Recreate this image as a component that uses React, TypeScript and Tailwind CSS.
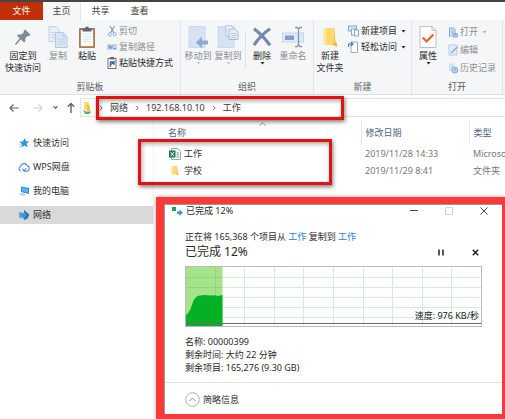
import type { ReactNode } from 'react';

type IconProps = { className?: string };

function PinIcon() {
  return (
    <svg width="18" height="20" viewBox="0 0 18 20" aria-hidden="true">
      <path d="M11.2 2.5 L16.4 7.6 L15.4 9 L13.4 9 L11.2 11.4 L11.4 14.6 L10 15.6 L3 8.8 L4 7.4 L7.4 7.4 L9.8 5.2 L9.8 3.6 Z" fill="#7e8d97" />
      <path d="M6.8 11.2 L1.5 17.5" stroke="#7e8d97" strokeWidth="1.5" />
    </svg>
  );
}

function CopyIcon() {
  return (
    <svg width="20" height="24" viewBox="0 0 20 24" aria-hidden="true">
      <path d="M1 1.5 H8 L11.5 5 V16.5 H1 Z" fill="#e6eef9" stroke="#c3d1e6" />
      <path d="M3 7.5 H9 M3 10 H9 M3 12.5 H9" stroke="#c3d1e6" strokeWidth=".8" />
      <path d="M7.5 7.5 H15 L19 11.5 V22.5 H7.5 Z" fill="#dbe6f5" stroke="#b6c8e1" />
      <path d="M15 7.5 V11.5 H19 M9.5 14 H17 M9.5 16.5 H17 M9.5 19 H17" stroke="#b4c7e2" strokeWidth=".8" fill="none" />
    </svg>
  );
}

function PasteIcon() {
  return (
    <svg width="18" height="24" viewBox="0 0 18 24" aria-hidden="true">
      <rect x="1" y="3" width="16" height="20" rx="1" fill="#ae7a4c" />
      <rect x="2.8" y="5" width="12.4" height="16.2" fill="#f8fbff" />
      <path d="M5 9 H13 M5 11.5 H13 M5 14 H13 M5 16.5 H13" stroke="#d3dfee" strokeWidth=".8" />
      <path d="M4.5 3.5 H7 A2 2 0 0 1 11 3.5 H13.5 V6.5 H4.5 Z" fill="#5f6973" />
    </svg>
  );
}

function ScissorsIcon() {
  return (
    <svg width="11" height="12" viewBox="0 0 11 12" fill="none" aria-hidden="true">
      <path d="M3 1 L7 8 M7.5 1 L3.5 8" stroke="#7e95b5" strokeWidth="1.1" />
      <circle cx="2.8" cy="9.3" r="1.6" stroke="#8fb0da" />
      <circle cx="7.6" cy="9.3" r="1.6" stroke="#8fb0da" />
    </svg>
  );
}

function PathIcon() {
  return (
    <svg width="11" height="12" viewBox="0 0 11 12" fill="none" aria-hidden="true">
      <rect x="0" y="3" width="10" height="6" fill="#c3d4ec" />
      <path d="M1.5 4.5 L2.5 7.5 L3.5 4.5 L4.5 7.5 L5.5 4.5 M6.5 7.5 H9" stroke="#6685b5" strokeWidth=".8" />
    </svg>
  );
}

function ShortcutIcon() {
  return (
    <svg width="11" height="12" viewBox="0 0 11 12" fill="none" aria-hidden="true">
      <rect x="1" y="1.5" width="8" height="10" fill="#fff" stroke="#8d6a4e" />
      <rect x="3" y="0" width="4" height="2.4" fill="#5f6a76" />
      <path d="M3.4 10 V5 H7.2 M4 7.6 L7 4.6 V8" stroke="#246cc0" strokeWidth="1.3" />
    </svg>
  );
}

function MoveToIcon() {
  return (
    <svg width="22" height="24" viewBox="0 0 22 24" aria-hidden="true">
      <rect x="2" y="1.5" width="16" height="21" fill="#d6e2f3" stroke="#ccd9ec" />
      <path d="M9 17.5 L15 11.8 V15.5 H21 V19.5 H15 V23.2 Z" fill="#92a8cb" />
    </svg>
  );
}

function CopyToIcon() {
  return (
    <svg width="22" height="24" viewBox="0 0 22 24" aria-hidden="true">
      <rect x="1" y="1.5" width="16" height="21" fill="#d6e2f3" stroke="#ccd9ec" />
      <path d="M9 .8 H15 L17 3 V11 H9 Z" fill="#edf3fb" stroke="#b3c4de" />
      <path d="M12 4 H18 L21 7 V14.5 H12 Z" fill="#e4ecf8" stroke="#a9bbd8" />
      <path d="M14 8.5 H19 M14 10.5 H19 M14 12.5 H19" stroke="#b3c4de" strokeWidth=".8" />
    </svg>
  );
}

function DeleteIcon() {
  return (
    <svg width="20" height="20" viewBox="0 0 20 20" fill="none" aria-hidden="true">
      <path d="M2 1.8 C7 5.5 13 11.5 18 18.2 M18 1.8 C12 6 6 12 2 18.2" stroke="#7288b2" strokeWidth="3.2" />
    </svg>
  );
}

function RenameIcon() {
  return (
    <svg width="24" height="22" viewBox="0 0 24 22" fill="none" aria-hidden="true">
      <rect x="1.5" y="7" width="21" height="9" fill="#e0e9f6" stroke="#c6d4e9" />
      <rect x="4" y="9.5" width="9" height="4.5" fill="#829dc8" />
      <path d="M14 1.5 H16 L17.5 3 L19 1.5 H21 M17.5 3 V19 M14 20.5 H16 L17.5 19 L19 20.5 H21" stroke="#8795ab" strokeWidth="1.3" />
    </svg>
  );
}

function FolderIcon({ className = 'h-[22px] w-4' }: IconProps) {
  return (
    <svg className={className} viewBox="0 0 16 22" aria-hidden="true">
      <path d="M1 2 H12.5 V19 H1 Z" fill="#fbd96c" />
      <path d="M1 2 H4 V20 L1 18.5 Z" fill="#fde9a9" />
      <path d="M12.5 2 L13.5 16 L15 17 V21 L9.5 18.5 L12 16 Z" fill="#eebf4a" />
    </svg>
  );
}

function NewItemIcon() {
  return (
    <svg width="12" height="12" viewBox="0 0 12 12" fill="none" aria-hidden="true">
      <rect x=".5" y="1" width="8" height="5" fill="#d7ecfb" stroke="#7ba8cc" />
      <rect x="3.5" y="4" width="4" height="6" fill="#fff" stroke="#93a7ba" />
      <rect x="6.5" y="5" width="4" height="6" fill="#f5f9fd" stroke="#93a7ba" />
    </svg>
  );
}

function EasyAccessIcon() {
  return (
    <svg width="12" height="12" viewBox="0 0 12 12" fill="none" aria-hidden="true">
      <path d="M3 1 H9.5 V11.5 H3 Z" fill="#fff" stroke="#9eacba" />
      <path d="M.6 6 V3 H4.6 M3 1.2 L5 3 L3 4.8" stroke="#3879bd" strokeWidth="1.1" />
    </svg>
  );
}

function PropertiesIcon() {
  return (
    <svg width="18" height="24" viewBox="0 0 18 24" fill="none" aria-hidden="true">
      <path d="M1 1.5 H13 L17 5.5 V22.5 H1 Z" fill="#fcfdfe" stroke="#bcc3ca" />
      <path d="M13 1.5 V5.5 H17" stroke="#bcc3ca" />
      <path d="M3.8 12.5 L7.5 16.4 L14.4 9.4" stroke="#e8622c" strokeWidth="2.2" />
    </svg>
  );
}

function OpenIcon() {
  return (
    <svg width="11" height="12" viewBox="0 0 11 12" fill="none" aria-hidden="true">
      <rect x="1" y="1" width="6" height="10" fill="#cfddf1" />
      <path d="M1.5 1 V11 M3 3 H6 M3 6 H6" stroke="#93acd2" />
      <path d="M5 7.5 H9.5 V11 H5 Z M7.2 3 V9" fill="#aec3e2" stroke="#8aa5cf" strokeWidth=".8" />
    </svg>
  );
}

function EditIcon() {
  return (
    <svg width="11" height="12" viewBox="0 0 11 12" fill="none" aria-hidden="true">
      <rect x="1" y="1" width="8" height="10" fill="#e2ebf8" stroke="#bccde6" />
      <path d="M3 9 L9.5 3" stroke="#93acd2" strokeWidth="1.5" />
    </svg>
  );
}

function HistoryIcon() {
  return (
    <svg width="11" height="12" viewBox="0 0 11 12" fill="none" aria-hidden="true">
      <path d="M1 1.5 H6 V9 H1 Z" fill="#d3e1f5" />
      <circle cx="6.8" cy="8" r="3" fill="#c3d4ee" stroke="#8aa5cf" />
      <path d="M6.8 6.3 V8 H8.3" stroke="#6f8fbf" strokeWidth=".8" />
    </svg>
  );
}

function StarIcon() {
  return (
    <svg width="12" height="12" viewBox="0 0 12 12" aria-hidden="true">
      <path d="M6.8 1 L8 4.2 L11.4 4.4 L8.8 6.6 L9.6 10.2 L6.4 8.4 L3.2 10.6 L3.9 7 L1.2 4.8 L4.8 4.4 Z" fill="#2f96dc" />
      <path d="M1 8 L3.4 7 M1 10.4 L3 9" stroke="#8cc4ee" strokeWidth=".8" />
    </svg>
  );
}

function CloudIcon() {
  return (
    <svg width="12" height="12" viewBox="0 0 12 12" fill="none" aria-hidden="true">
      <path d="M3.2 10.2 A2.5 2.5 0 0 1 2.6 5.4 A3.5 3.5 0 0 1 9.2 4.6 A2.9 2.9 0 0 1 9 10.2 H6.2 L4.4 7.6 M6.2 10.2 L8 7.4" stroke="#4e7fe6" strokeWidth="1.1" />
    </svg>
  );
}

function ComputerIcon() {
  return (
    <svg width="12" height="12" viewBox="0 0 12 12" aria-hidden="true">
      <path d="M3 1.5 L11 3 V9 L3 7 Z" fill="#2d8fd6" />
      <path d="M4 2.8 L10 4 V7.6 L4 6.2 Z" fill="#5bb5ee" />
      <path d="M0.5 9 L4 8 L8.5 9.6 L5 11 Z" fill="#c3ccd4" />
    </svg>
  );
}

function NetworkIcon() {
  return (
    <svg width="12" height="12" viewBox="0 0 12 12" aria-hidden="true">
      <path d="M1 3 L6.5 4.5 V10 L1 8.4 Z" fill="#58ade6" />
      <path d="M6 1 L11.4 5.4 L9.6 9.4 L6 11 Z" fill="#2a79bb" />
      <path d="M3 3.6 L8.6 4.4 L6.5 8.4 L3 7.6 Z" fill="#3f9adb" />
    </svg>
  );
}

function NetFolderIcon() {
  return (
    <svg width="10" height="14" viewBox="0 0 10 14" aria-hidden="true">
      <path d="M2 1 H7 V10 L2 9 Z" fill="#fada7f" />
      <path d="M5 3 L8 5 V10 H5 Z" fill="#efbf48" />
      <path d="M0.5 9 L4 10.5 H9.5 L7 13 H3.5 Z" fill="#46b85c" />
    </svg>
  );
}

function ExcelIcon() {
  return (
    <svg width="12" height="12" viewBox="0 0 12 12" fill="none" aria-hidden="true">
      <path d="M2.5 .5 H8.5 L11.5 3.5 V11.5 H2.5 Z" fill="#fff" stroke="#9aa8a0" />
      <path d="M7.5 5 H10 M7.5 7 H10 M7.5 9 H10" stroke="#5aa67d" />
      <rect x="0" y="2.5" width="6.5" height="7" fill="#17824a" />
      <path d="M1.8 4.2 L4.8 8 M4.8 4.2 L1.8 8" stroke="#fff" />
    </svg>
  );
}

function TransferIcon() {
  return (
    <svg width="12" height="10" viewBox="0 0 12 10" aria-hidden="true">
      <rect x="1" y="1" width="4" height="4" fill="#2ba245" />
      <path d="M6 5.6 H8.4 V3.6 L12 6.8 L8.4 10 V8 H6 Z" fill="#3c93e6" />
    </svg>
  );
}

function Caret({ className = '' }: IconProps) {
  return (
    <svg className={className} width="5" height="3" viewBox="0 0 5 3" aria-hidden="true">
      <path d="M0.5 0 H4.5 L2.5 2.6 Z" fill="currentColor" />
    </svg>
  );
}

type BigButtonProps = {
  icon: ReactNode;
  lines: string[];
  width: string;
  muted?: boolean;
  caret?: boolean;
};

function BigButton({ icon, lines, width, muted, caret }: BigButtonProps) {
  return (
    <button type="button" className={`flex shrink-0 flex-col items-center ${width} ${muted ? 'text-[#8d8f92]' : 'text-[#2b2b2b]'}`}>
      <span className="flex h-[26px] items-center">{icon}</span>
      {lines.map((line) => (
        <span key={line} className="whitespace-nowrap">{line}</span>
      ))}
      {caret && <Caret className={muted ? 'text-[#c6c8ca]' : ''} />}
    </button>
  );
}

function SmallButton({ icon, label, muted, caret }: { icon: ReactNode; label: string; muted?: boolean; caret?: boolean }) {
  return (
    <button type="button" className={`flex items-center gap-px whitespace-nowrap ${muted ? 'text-[#8d8f92]' : 'text-[#2b2b2b]'}`}>
      {icon}
      <span>{label}</span>
      {caret && <Caret className={muted ? 'ml-[3px] text-[#b4b6b8]' : 'ml-[3px]'} />}
    </button>
  );
}

function Group({ title, width, children }: { title: string; width: string; children: ReactNode }) {
  return (
    <section className={`shrink-0 border-r border-[#e3e5e8] pt-1 pb-px ${width}`}>
      <div className="flex h-[57px] items-start">{children}</div>
      <h2 className="text-center text-[#5c5f63]">{title}</h2>
    </section>
  );
}

function Ribbon() {
  return (
    <div className="flex overflow-hidden border-b border-[#dfe1e4] bg-[#f5f6f8]">
      <Group title="剪贴板" width="w-[181px]">
        <BigButton icon={<PinIcon />} lines={['固定到', '快速访问']} width="ml-px w-11" />
        <BigButton icon={<CopyIcon />} lines={['复制']} width="w-[26px]" muted />
        <BigButton icon={<PasteIcon />} lines={['粘贴']} width="w-8" />
        <div className="ml-1 flex flex-col gap-1 pt-px">
          <SmallButton icon={<ScissorsIcon />} label="剪切" muted />
          <SmallButton icon={<PathIcon />} label="复制路径" muted />
          <SmallButton icon={<ShortcutIcon />} label="粘贴快捷方式" />
        </div>
      </Group>
      <Group title="组织" width="w-[133px]">
        <BigButton icon={<MoveToIcon />} lines={['移动到']} width="ml-[2px] w-[30px]" muted caret />
        <BigButton icon={<CopyToIcon />} lines={['复制到']} width="w-[30px]" muted caret />
        <span className="ml-[2px] mt-2 h-9 w-px bg-[#e0e2e5]" />
        <BigButton icon={<DeleteIcon />} lines={['删除']} width="w-8" caret />
        <BigButton icon={<RenameIcon />} lines={['重命名']} width="w-[30px]" muted />
      </Group>
      <Group title="新建" width="w-[98px]">
        <BigButton icon={<FolderIcon />} lines={['新建', '文件夹']} width="w-8" />
        <div className="ml-[2px] flex flex-col gap-1 pt-px">
          <SmallButton icon={<NewItemIcon />} label="新建项目" caret />
          <SmallButton icon={<EasyAccessIcon />} label="轻松访问" caret />
        </div>
      </Group>
      <Group title="打开" width="w-[91px]">
        <BigButton icon={<PropertiesIcon />} lines={['属性']} width="w-8" caret />
        <div className="ml-1 flex flex-col gap-[6px] pt-[2px]">
          <SmallButton icon={<OpenIcon />} label="打开" muted caret />
          <SmallButton icon={<EditIcon />} label="编辑" muted />
          <SmallButton icon={<HistoryIcon />} label="历史记录" muted />
        </div>
      </Group>
    </div>
  );
}

function Chevron() {
  return (
    <svg width="4" height="6" viewBox="0 0 4 6" fill="none" aria-hidden="true">
      <path d="M1 .8 L3.2 3 L1 5.2" stroke="#6b6b6b" />
    </svg>
  );
}

function AddressBar() {
  return (
    <div className="flex h-[25px] items-center whitespace-nowrap pl-[9px] text-[#5f6266]">
      <button type="button" aria-label="后退">
        <svg width="10" height="10" viewBox="0 0 10 10" fill="none">
          <path d="M9.5 5 H1 M4.5 1.5 L1 5 L4.5 8.5" stroke="currentColor" strokeWidth="1.2" />
        </svg>
      </button>
      <button type="button" aria-label="前进" className="ml-[14px] text-[#d0d2d4]">
        <svg width="10" height="10" viewBox="0 0 10 10" fill="none">
          <path d="M.5 5 H9 M5.5 1.5 L9 5 L5.5 8.5" stroke="currentColor" strokeWidth="1.2" />
        </svg>
      </button>
      <button type="button" aria-label="最近" className="ml-[10px]">
        <svg width="5" height="5" viewBox="0 0 5 5" fill="none">
          <path d="M.5 1.2 L2.5 3.4 L4.5 1.2" stroke="currentColor" strokeWidth="1.2" />
        </svg>
      </button>
      <button type="button" aria-label="上移" className="ml-2">
        <svg width="10" height="12" viewBox="0 0 10 12" fill="none">
          <path d="M5 11 V1.5 M1.8 4.8 L5 1.5 L8.2 4.8" stroke="currentColor" strokeWidth="1.4" />
        </svg>
      </button>
      <div className="ml-1 flex h-[19px] flex-1 items-center gap-[7px] border border-r-0 border-[#e2e4e6] pl-px text-[#3a3a3a]">
        <NetFolderIcon />
        <Chevron />
        <a href="#network">网络</a>
        <Chevron />
        <a href="#host">192.168.10.10</a>
        <Chevron />
        <a href="#work">工作</a>
      </div>
    </div>
  );
}

const NAV = [
  { label: '快速访问', icon: <StarIcon /> },
  { label: 'WPS网盘', icon: <CloudIcon /> },
  { label: '我的电脑', icon: <ComputerIcon /> },
  { label: '网络', icon: <NetworkIcon />, active: true },
];

const FILES = [
  { name: '工作', date: '2019/11/28 14:33', type: 'Microsoft Excel', icon: <ExcelIcon /> },
  { name: '学校', date: '2019/11/29 8:41', type: '文件夹', icon: <FolderIcon className="h-[11px] w-3" /> },
];

function Browser() {
  return (
    <div className="flex">
      <nav className="flex w-[153px] shrink-0 flex-col gap-[6px] pt-[14px] text-[#333]">
        {NAV.map((item) => (
          <a
            key={item.label}
            href="#nav"
            className={`flex h-[18px] items-center gap-[3px] pl-[18px] ${item.active ? 'bg-[#d9d9d9]' : ''}`}
          >
            {item.icon}
            {item.label}
          </a>
        ))}
      </nav>
      <div className="relative min-w-0 flex-1 overflow-hidden border-l border-[#f4f4f4]">
        <svg className="absolute left-[105px] top-[2px]" width="7" height="4" viewBox="0 0 7 4" fill="none" aria-hidden="true">
          <path d="M.5 3.5 L3.5 .8 L6.5 3.5" stroke="#9a9a9a" />
        </svg>
        <table className="w-full table-fixed border-collapse text-left whitespace-nowrap">
          <thead>
            <tr className="h-[25px] text-[#4f6484]">
              <th className="w-[207px] border-r border-[#e8ebee] pl-[14px] font-normal">名称</th>
              <th className="w-[108px] border-r border-[#e8ebee] pl-1 font-normal">修改日期</th>
              <th className="overflow-hidden pl-1 font-normal">类型</th>
            </tr>
          </thead>
          <tbody className="text-[#777]">
            {FILES.map((file) => (
              <tr key={file.name} className="h-[17px]">
                <td className="pl-[15px] text-[#333]">
                  <span className="flex items-center gap-[3px]">
                    {file.icon}
                    {file.name}
                  </span>
                </td>
                <td className="pl-1">{file.date}</td>
                <td className="overflow-hidden pl-1">{file.type}</td>
              </tr>
            ))}
          </tbody>
        </table>
      </div>
    </div>
  );
}

function SpeedChart() {
  return (
    <div className="relative mt-[5px] mr-5">
      <svg className="block h-[61px] w-full" viewBox="0 0 297 61" preserveAspectRatio="none" aria-hidden="true">
        <rect x=".5" y=".5" width="296" height="60" fill="#fff" stroke="#bcbcbc" />
        <path
          d="M59.5 1 V60 M89.5 1 V60 M118.5 1 V60 M148.5 1 V60 M178.5 1 V60 M207.5 1 V60 M237.5 1 V60 M266.5 1 V60 M1 11.5 H296 M1 21.5 H296 M1 31.5 H296 M1 41.5 H296 M1 51.5 H296"
          stroke="#d3eedb"
        />
        <rect x="1" y="1" width="36.5" height="59" fill="#a6e48c" />
        <path d="M30.5 1 V60 M1 11.5 H37.5 M1 21.5 H37.5" stroke="#92d67c" />
        <path d="M1 60 V49 C5 46 6 41 8 36 C10 31 12 30 15 29.5 L20 29 L24 29.6 L30 29.3 L33 30 L37.5 29 V60 Z" fill="#06b025" />
        <path d="M1 57.5 H296" stroke="#6a6a6a" />
      </svg>
      <span className="absolute right-[3px] bottom-[5px] text-[#222]">速度: 976 KB/秒</span>
    </div>
  );
}

function CopyDialog() {
  return (
    <div
      role="dialog"
      aria-label="已完成 12%"
      className="absolute top-[197px] right-0 left-[156px] border-t-[7px] border-r-[3px] border-b-[5px] border-l-8 border-[#fd3838] bg-white shadow-[0_0_4px_rgba(0,0,0,0.35)]"
    >
      <div className="border-l border-t border-[#9a9a9a] text-[#2a2a2a]">
        <header className="flex h-3 items-center pl-[6px]">
          <TransferIcon />
          <span className="ml-[3px] flex-1">已完成 12%</span>
          <div className="flex gap-[27px] pr-[14px] text-[#4a4a4a]">
            <button type="button" aria-label="最小化">
              <svg width="8" height="8" viewBox="0 0 8 8"><path d="M0 3.5 H8" stroke="currentColor" /></svg>
            </button>
            <button type="button" aria-label="最大化" disabled className="text-[#d2d2d2]">
              <svg width="8" height="8" viewBox="0 0 8 8" fill="none"><path d="M.5 .5 H7.5 V7.5 H.5 Z" stroke="currentColor" /></svg>
            </button>
            <button type="button" aria-label="关闭">
              <svg width="8" height="8" viewBox="0 0 8 8"><path d="M.5 .5 L7.5 7.5 M7.5 .5 L.5 7.5" stroke="currentColor" /></svg>
            </button>
          </div>
        </header>

        <div className="pt-[14px] pl-5">
          <p>
            正在将 165,368 个项目从 <a href="#from" className="text-[#2b7fe0]">工作</a> 复制到{' '}
            <a href="#to" className="text-[#2b7fe0]">工作</a>
          </p>
          <div className="flex items-center pr-[23px]">
            <h1 className="flex-1 text-[12px] leading-[18px]">已完成 12%</h1>
            <button type="button" aria-label="暂停" className="mr-7">
              <svg width="6" height="7" viewBox="0 0 6 7"><path d="M1 .5 V6.5 M5 .5 V6.5" stroke="#222" strokeWidth="1.5" /></svg>
            </button>
            <button type="button" aria-label="取消">
              <svg width="7" height="7" viewBox="0 0 7 7"><path d="M.8 .8 L6.2 6.2 M6.2 .8 L.8 6.2" stroke="#222" strokeWidth="1.5" /></svg>
            </button>
          </div>
          <SpeedChart />
          <div className="mt-2 leading-[13px]">
            <p>名称: 00000399</p>
            <p>剩余时间: 大约 22 分钟</p>
            <p>剩余项目: 165,276 (9.30 GB)</p>
          </div>
        </div>

        <footer className="mt-2 border-t border-[#e4e4e4] pt-[9px] pb-[7px] pl-5">
          <button type="button" className="flex items-center gap-[3px]">
            <svg width="15" height="15" viewBox="0 0 15 15" fill="none" aria-hidden="true">
              <circle cx="7.5" cy="7.5" r="6.8" stroke="#b0b0b0" />
              <path d="M4.5 9 L7.5 6 L10.5 9" stroke="#8a8a8a" />
            </svg>
            简略信息
          </button>
        </footer>
      </div>
    </div>
  );
}

export default function App() {
  return (
    <div className="relative min-h-screen overflow-hidden bg-white font-['Noto_Sans','Noto_Sans_CJK_SC',sans-serif] text-[9px] leading-3">
      <div className="h-[2px] bg-[#454545]" />
      <div role="tablist" className="flex h-[18px] text-[#444]">
        <button type="button" role="tab" className="w-[43px] bg-[#bf3009] text-white">文件</button>
        <button type="button" role="tab" aria-selected="true" className="w-[38px] border-r border-[#e3e5e8] bg-[#f5f6f8]">主页</button>
        <button type="button" role="tab" className="w-[39px]">共享</button>
        <button type="button" role="tab" className="w-[39px]">查看</button>
      </div>
      <Ribbon />
      <AddressBar />
      <Browser />

      <div className="pointer-events-none absolute top-[96px] left-[96px] h-6 w-[248px] border-3 border-[#e51212] shadow-[1px_2px_4px_rgba(0,0,0,0.5),inset_1px_2px_4px_rgba(0,0,0,0.35)]" />
      <div className="pointer-events-none absolute top-[139px] left-[138px] h-[46px] w-[194px] border-3 border-[#e51212] shadow-[1px_2px_4px_rgba(0,0,0,0.5),inset_1px_2px_4px_rgba(0,0,0,0.35)]" />
      <CopyDialog />
    </div>
  );
}
